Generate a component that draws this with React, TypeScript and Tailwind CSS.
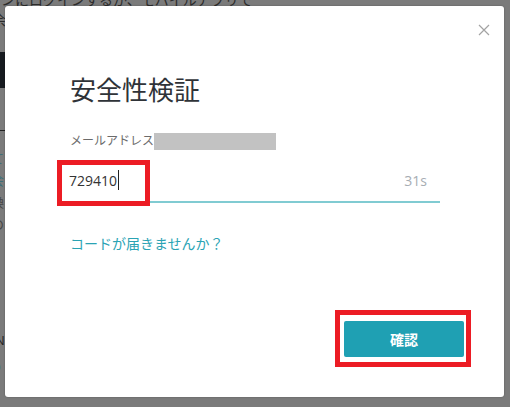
import { useState } from "react"

const font = { fontFamily: '"Open Sans", "Noto Sans CJK JP", sans-serif' }

function BackgroundPage() {
  // page behind the overlay, only a sliver of it shows
  return (
    <div className="h-[407px] w-[510px] overflow-hidden bg-[#7b7b7b] text-[14px] text-[#2c2c2c]">
      <div className="-mt-[10px] whitespace-nowrap pl-[1px] leading-[20px]">
        ンにログインするか、モバイルアプリで
      </div>
      <div className="-ml-[8px] leading-[20px]">余</div>
      <div className="mt-[22px] h-[36px] w-[6px] bg-[#161a1f]" />
      <div className="mt-[42px] h-px w-[6px] bg-[#222]" />
      <div className="-ml-[9px] mt-[16px] flex flex-col text-[13px] leading-[22px] text-[#3d6f78]">
        <span>て</span>
        <span>会</span>
        <span className="text-[#444]">換</span>
        <span className="text-[#444]">の</span>
      </div>
      <div className="-ml-[5px] mt-[96px] text-[13px] text-[#222]">N</div>
      <div className="-ml-[7px] mt-[6px] text-[13px] text-[#2e8a93]">ð</div>
    </div>
  )
}

export default function App() {
  const [code, setCode] = useState("729410")

  return (
    <div className="relative h-[407px] w-[510px] overflow-hidden" style={font}>
      <BackgroundPage />

      <div className="absolute left-[5px] top-[6px] flex h-[391px] w-[499px] flex-col rounded-[3px] bg-white px-[65px] pt-[66px] shadow-[0_0_2px_rgba(0,0,0,0.3)]">
        <button className="absolute right-[14px] top-[18px] text-[#a3a3a3]">
          <svg width="12" height="12" viewBox="0 0 12 12" fill="none" stroke="currentColor" strokeWidth="1.2">
            <path d="M1 1L11 11M11 1L1 11" />
          </svg>
        </button>

        <h1 className="text-[26px] font-normal leading-[36px] text-[#2f3338]">安全性検証</h1>

        <div className="mt-[24px] flex items-center text-[12px] leading-[18px] text-[#6b6b6b]">
          <span>メールアドレス</span>
          <span className="h-[17px] w-[122px] bg-[#c2c2c2]" />
        </div>

        <div className="relative -ml-[13px] mt-[13px] flex h-[40px] w-[383px] items-center border-b-2 border-[#80cbd2] pb-[4px] pl-[12px]">
          <div className="flex items-center text-[14px] text-[#333]">
            <span>{code}</span>
            <span className="ml-px h-[20px] w-px bg-[#222]" />
          </div>
          <input
            value={code}
            onChange={(e) => setCode(e.target.value)}
            className="absolute inset-0 opacity-0"
          />
          <span className="ml-auto mr-[13px] text-[14px] text-[#a7adb3]">31s</span>
          <div className="pointer-events-none absolute left-0 top-[-3px] h-[46px] w-[93px] border-[5px] border-[#ec1c24]" />
        </div>

        <a className="mt-[31px] text-[14px] leading-[20px] text-[#2aa3b4]">コードが届きませんか？</a>

        <div className="mt-auto mb-[30px] flex justify-end">
          <div className="-mr-[32px] border-[5px] border-[#ec1c24] pb-[5px] pl-[4px] pr-[2px] pt-[6px]">
            <button className="flex h-[36px] w-[120px] items-center justify-center rounded-[2px] bg-[#1fa0b3] text-[14px] font-bold text-white">
              確認
            </button>
          </div>
        </div>
      </div>
    </div>
  )
}
